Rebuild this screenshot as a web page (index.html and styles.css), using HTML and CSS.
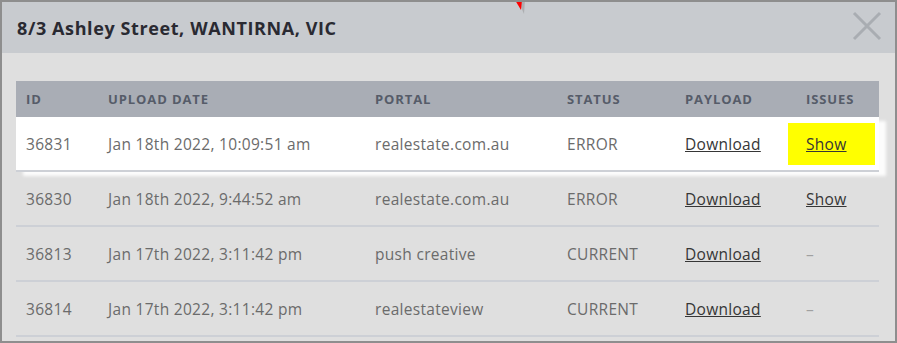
FILE: index.html
```html
<!DOCTYPE html>
<html lang="en">
  <head>
    <meta charset="UTF-8" />
    <meta name="viewport" content="width=device-width, initial-scale=1.0" />
    <title>Upload history</title>
    <link rel="stylesheet" href="styles.css">
  </head>
  <body>
    <div class="modal">
      <div class="modal-header">
        <h2>8/3 Ashley Street, WANTIRNA, VIC</h2>
        <span class="close-btn">
          <svg width="30" height="30" viewBox="0 0 30 30">
            <path d="M2 2 L28 28 M28 2 L2 28" stroke="#a9adb2" stroke-width="3" fill="none" />
          </svg>
        </span>
      </div>

      <div class="modal-body">
        <div class="grid-table">
          <div class="row head">
            <div>ID</div>
            <div>Upload Date</div>
            <div>Portal</div>
            <div>Status</div>
            <div>Payload</div>
            <div>Issues</div>
          </div>
          <div class="row active">
            <div>36831</div>
            <div>Jan 18th 2022, 10:09:51 am</div>
            <div>realestate.com.au</div>
            <div>ERROR</div>
            <div><a href="#">Download</a></div>
            <div><a href="#" class="marked">Show</a></div>
          </div>
          <div class="row">
            <div>36830</div>
            <div>Jan 18th 2022, 9:44:52 am</div>
            <div>realestate.com.au</div>
            <div>ERROR</div>
            <div><a href="#">Download</a></div>
            <div><a href="#">Show</a></div>
          </div>
          <div class="row">
            <div>36813</div>
            <div>Jan 17th 2022, 3:11:42 pm</div>
            <div>push creative</div>
            <div>CURRENT</div>
            <div><a href="#">Download</a></div>
            <div class="dash">–</div>
          </div>
          <div class="row">
            <div>36814</div>
            <div>Jan 17th 2022, 3:11:42 pm</div>
            <div>realestateview</div>
            <div>CURRENT</div>
            <div><a href="#">Download</a></div>
            <div class="dash">–</div>
          </div>
        </div>
      </div>

      <svg class="pointer" width="14" height="18" viewBox="0 0 14 18">
        <polygon points="3,0 10,0 9,14" fill="#8c8c8c" opacity="0.45" />
        <polygon points="0,0 7,0 6,10" fill="#ff0000" />
      </svg>
    </div>
  </body>
</html>
```

FILE: styles.css
```css
body {
  margin: 0;
  font-family: "Open Sans", Arial, sans-serif;
  background-color: #dedede;
}

.modal {
  position: relative;
  width: 897px;
  height: 343px;
  box-sizing: border-box;
  border: 2px solid #8e8e8e;
  background-color: #dfdfdf;
  overflow: hidden;
}

.modal-header {
  height: 51px;
  background-color: #c8cbcf;
  display: flex;
  align-items: center;
  justify-content: space-between;
  padding: 0 13px 0 15px;
}

.modal-header h2 {
  margin: 0;
  font-size: 18px;
  font-weight: 700;
  letter-spacing: 0.6px;
  color: #2a2a32;
}

.close-btn {
  display: flex;
  margin-top: -3px;
}

.modal-body {
  padding: 28px 14px 0 14px;
}

.grid-table {
  width: 863px;
}

.row {
  display: grid;
  grid-template-columns: 82px 267px 192px 118px 121px 83px;
  align-items: center;
  height: 53px;
  border-bottom: 2px solid #cdd0d6;
  font-size: 15.5px;
  letter-spacing: 0.3px;
  color: #6b6b6b;
}

.row > div {
  padding-left: 10px;
}

.row.head {
  height: 36px;
  border-bottom: none;
  background-color: #a9adb5;
  font-size: 13px;
  font-weight: 700;
  letter-spacing: 0.9px;
  text-transform: uppercase;
  color: #565c69;
}

.row.active {
  background-color: #fff;
  box-shadow: 7px 4px 3px rgba(255, 255, 255, 0.9);
  position: relative;
}

.row a {
  color: #363636;
  text-decoration: underline;
}

.row .marked {
  display: inline-block;
  margin-left: -18px;
  padding: 10px 28px 10px 18px;
  background-color: #ffff00;
}

.dash {
  color: #a0a0a0;
}

.pointer {
  position: absolute;
  top: -2px;
  left: 513px;
}
```
